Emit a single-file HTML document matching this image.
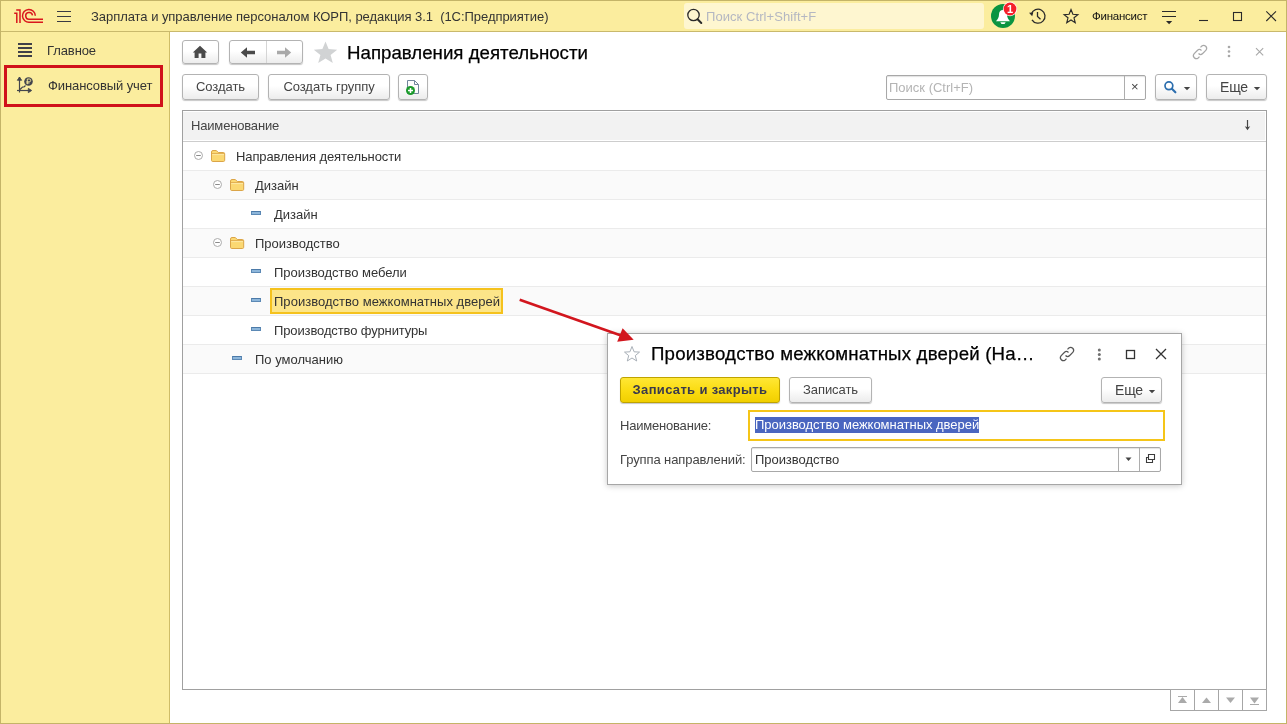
<!DOCTYPE html>
<html lang="ru">
<head>
<meta charset="utf-8">
<title>Направления деятельности</title>
<style>
*{box-sizing:border-box;margin:0;padding:0}
html,body{width:1287px;height:724px;overflow:hidden;background:#fff}
body{font-family:"Liberation Sans",Arial,sans-serif;font-size:13px;color:#333;position:relative}
.abs{position:absolute}
#frame{position:absolute;left:0;top:0;width:1287px;height:724px;border:1px solid #c4b468;pointer-events:none;z-index:50}
#topbar{position:absolute;left:0;top:0;width:1287px;height:32px;background:#fbed9e;border-bottom:1px solid #c9b96c}
#side{position:absolute;left:0;top:32px;width:170px;height:692px;background:#fbed9e;border-right:1px solid #cfbd68}
.t{position:absolute;white-space:nowrap;line-height:16px;letter-spacing:-.1px}
.t,.lbl,.btn{will-change:opacity}
.btn{position:absolute;border:1px solid #b3b3b3;border-radius:3px;background:linear-gradient(#ffffff 0%,#ffffff 45%,#ececec 100%);box-shadow:0 1px 1px rgba(0,0,0,.22);color:#444;font-size:13px;text-align:center;white-space:nowrap;letter-spacing:-.05px}
.row{position:absolute;left:183px;width:1083px;height:29px;border-bottom:1px solid #ebebeb}
.row.alt{background:#fafafa}
.lbl{position:absolute;white-space:nowrap;font-size:13px;color:#333;line-height:16px;letter-spacing:0}
</style>
</head>
<body>
<div id="topbar"></div>
<div id="side"></div>
<div id="frame"></div>

<!-- TOP BAR -->
<svg class="abs" style="left:0;top:0" width="1287" height="32" viewBox="0 0 1287 32">
 <g fill="none" stroke="#d9161d" stroke-width="1.500">
  <path d="M14.200 13.200H16.800V23"/>
  <path d="M16.200 10H20V23"/>
  <path d="M43 22.200H29.500A6.400 6.400 0 1 1 35.300 15.800"/>
  <path d="M43 19.200H29.600A3.400 3.400 0 1 1 32.500 15.300"/>
 </g>
 <path d="M57 11.500H71M57 16.500H71M57 21.500H71" stroke="#3a3a42" stroke-width="1"/>
 <rect x="684" y="3" width="300" height="26" rx="3" fill="#fef6d0"/>
 <circle cx="693.500" cy="15" r="5.700" fill="none" stroke="#2a2a2a" stroke-width="1.300"/>
 <path d="M697.600 19.300L701.300 23" stroke="#2a2a2a" stroke-width="2" stroke-linecap="round"/>
 <!-- bell -->
 <circle cx="1003" cy="16" r="12" fill="#0b9441"/>
 <path d="M1003 10c-2.700 0-4 2-4 4.600 0 3-1.300 5-3 6.600h14c-1.700-1.600-3-3.600-3-6.600 0-2.600-1.300-4.600-4-4.600z" fill="#fff"/>
 <path d="M1000.300 22.300h5.400l-1.200 1.700h-3z" fill="#fff"/>
 <circle cx="1010" cy="9" r="7.200" fill="#fff"/>
 <circle cx="1010" cy="9" r="6.400" fill="#f4212a"/>
 <!-- history -->
 <path d="M1031.300 14.200A7 7 0 1 1 1032 19.800" fill="none" stroke="#2a2a2a" stroke-width="1.300"/>
 <path d="M1029 12.800L1033.300 12.400L1032.200 16.300z" fill="#2a2a2a"/>
 <path d="M1037.500 12V16.500L1040.500 19.300" fill="none" stroke="#2a2a2a" stroke-width="1.300"/>
 <!-- star -->
 <path transform="translate(1071 16.500) scale(.94) translate(-1071 -16.700)" d="M1071 9.300l2 5 5.300.4-4.100 3.400 1.300 5.200-4.500-2.900-4.500 2.900 1.300-5.200-4.100-3.400 5.300-.4z" fill="none" stroke="#2a2a2a" stroke-width="1.250" stroke-linejoin="miter"/>
 <!-- menu -->
 <path d="M1162 11.500H1176M1162 16.500H1176" stroke="#2a2a2a" stroke-width="1.100"/>
 <path d="M1166 21h6.200l-3.100 3.200z" fill="#2a2a2a"/>
 <path d="M1199 20.500H1208" stroke="#2a2a2a" stroke-width="1.100"/>
 <rect x="1233.500" y="12.500" width="8" height="8" fill="none" stroke="#2a2a2a" stroke-width="1.100"/>
 <path d="M1266.300 11.300L1276 21M1276 11.300L1266.300 21" stroke="#2a2a2a" stroke-width="1.100"/>
</svg>
<div class="t" style="left:91px;top:9px;font-size:13px;letter-spacing:-.045px;color:#333">Зарплата и управление персоналом КОРП, редакция 3.1&nbsp; (1С:Предприятие)</div>
<div class="t" style="left:706px;top:9px;font-size:13px;letter-spacing:.07px;color:#b4b7c2">Поиск Ctrl+Shift+F</div>
<div class="t" style="left:1005px;top:1px;font-size:11px;font-weight:bold;color:#fff;width:10px;text-align:center;letter-spacing:0">1</div>
<div class="t" style="left:1092px;top:8px;font-size:11.500px;letter-spacing:-.25px;color:#111">Финансист</div>

<!-- SIDEBAR -->
<svg class="abs" style="left:0;top:32px" width="170" height="80" viewBox="0 32 170 80">
 <path d="M18 44H32M18 48H32M18 52H32M18 56H32" stroke="#404048" stroke-width="2"/>
 <rect x="5.500" y="66.500" width="156" height="39" fill="none" stroke="#d0111b" stroke-width="3"/>
 <g fill="none" stroke="#43454d" stroke-width="1.200">
  <path d="M19.500 77V92.500"/><path d="M17 90.500H31"/>
  <path d="M17.300 80.300L19.500 77L21.700 80.300z" fill="#43454d" stroke-width=".8"/><path d="M28.300 88.300L31.700 90.500L28.300 92.700z" fill="#43454d" stroke-width=".8"/>
  <path d="M20 89.500L22.500 87H24L25.500 85.500"/>
 </g>
 <circle cx="28.500" cy="81.500" r="4.300" fill="#43454d"/>
 <path d="M27.300 84.200V79H29.300A1.400 1.400 0 0 1 29.300 81.800H26.300M26.300 83H29.500" fill="none" stroke="#fbed9e" stroke-width=".9"/>
</svg>
<div class="t" style="left:47px;top:43px;font-size:13px;color:#333">Главное</div>
<div class="t" style="left:48px;top:78px;font-size:13px;color:#333">Финансовый учет</div>

<!-- NAV ROW -->
<div class="btn" style="left:182px;top:40px;width:37px;height:24px"></div>
<svg class="abs" style="left:192px;top:45px" width="16" height="14" viewBox="0 0 16 14"><path d="M8 .8L.8 7.500H2.600V13H6.600V8.500H9.400V13H13.400V7.500H15.200z" fill="#4a4a4a"/></svg>
<div class="btn" style="left:229px;top:40px;width:74px;height:24px"></div>
<div class="abs" style="left:266px;top:41px;width:1px;height:22px;background:#d5d5d5"></div>
<svg class="abs" style="left:240px;top:46px" width="16" height="13" viewBox="0 0 16 13"><path d="M15 4.800H7V1.200L.800 6.500L7 11.800V8.200H15z" fill="#4a4a4a"/></svg>
<svg class="abs" style="left:276px;top:46px" width="16" height="13" viewBox="0 0 16 13"><path d="M1 4.800H9V1.200L15.200 6.500L9 11.800V8.200H1z" fill="#a9a9a9"/></svg>
<svg class="abs" style="left:313px;top:41px" width="25" height="23" viewBox="0 0 25 23"><path d="M12.500 .6l3.100 7.500 8.600.6-6.600 5.200 2.200 8.100-7.300-4.500-7.300 4.500 2.200-8.100L.8 8.700l8.600-.6z" fill="#d1d3d4"/></svg>
<div class="t" style="left:347px;top:42px;font-size:18.670px;line-height:22px;-webkit-text-stroke:.25px #000;letter-spacing:.02px;color:#000">Направления деятельности</div>

<svg class="abs" style="left:1191px;top:43px" width="18" height="18" viewBox="0 0 18 18">
 <g fill="none" stroke="#a8a8a8" stroke-width="1.200"><path d="M7.500 10.500a3 3 0 0 0 4.200 0l3.300-3.300a3 3 0 0 0-4.200-4.200L9.500 4.300"/><path d="M10.500 7.500a3 3 0 0 0-4.200 0L3 10.800A3 3 0 0 0 7.200 15l1.300-1.300"/></g>
</svg>
<svg class="abs" style="left:1225px;top:44px" width="8" height="16" viewBox="0 0 8 16"><g fill="#a8a8a8"><circle cx="4" cy="3" r="1.300"/><circle cx="4" cy="7.500" r="1.300"/><circle cx="4" cy="12" r="1.300"/></g></svg>
<svg class="abs" style="left:1254px;top:46px" width="12" height="12" viewBox="0 0 12 12"><path d="M2 2.200L9.200 9.400M9.200 2.200L2 9.400" stroke="#a8a8a8" stroke-width="1.100"/></svg>

<!-- COMMAND BAR -->
<div class="btn" style="left:182px;top:74px;width:77px;height:26px;line-height:24px">Создать</div>
<div class="btn" style="left:268px;top:74px;width:122px;height:26px;line-height:24px">Создать группу</div>
<div class="btn" style="left:398px;top:74px;width:30px;height:26px"></div>
<svg class="abs" style="left:404px;top:78px" width="18" height="18" viewBox="404 78 18 18">
 <path d="M407.500 80.500H414.500L418.500 84.500V93.500H407.500z" fill="#fdfdfd" stroke="#71859c" stroke-width="1"/><path d="M414.500 80.500V84.500H418.500" fill="none" stroke="#71859c" stroke-width="1"/>
 <circle cx="410.500" cy="90.500" r="4.500" fill="#1b9a2c"/><path d="M410.500 88V93M408 90.500H413" stroke="#fff" stroke-width="1.500"/>
</svg>

<div class="abs" style="left:886px;top:75px;width:260px;height:25px;border:1px solid #a8a8a8;border-radius:2px;background:#fff;box-shadow:inset 0 1px 1px rgba(0,0,0,.12)"></div>
<div class="abs" style="left:1124px;top:76px;width:1px;height:23px;background:#adadad"></div>
<div class="t" style="left:889px;top:80px;font-size:13px;letter-spacing:0;color:#b4b4b4">Поиск (Ctrl+F)</div>
<div class="t" style="left:1131px;top:79px;font-size:13px;color:#444">×</div>
<div class="btn" style="left:1155px;top:74px;width:42px;height:26px"></div>
<svg class="abs" style="left:1162px;top:79px" width="16" height="16" viewBox="0 0 16 16"><circle cx="6.900" cy="6.800" r="3.900" fill="none" stroke="#2c6eae" stroke-width="1.700"/><path d="M9.900 9.800L13.400 13.300" stroke="#2c6eae" stroke-width="2.100" stroke-linecap="round"/></svg>
<svg class="abs" style="left:1183px;top:86px" width="8" height="5" viewBox="0 0 8 5"><path d="M.8 1h6.400L4 4.300z" fill="#444"/></svg>
<div class="btn" style="left:1206px;top:74px;width:61px;height:26px;line-height:24px;font-size:14px;letter-spacing:-.2px;text-align:left;padding-left:13px">Еще</div>
<svg class="abs" style="left:1253px;top:86px" width="8" height="5" viewBox="0 0 8 5"><path d="M.8 1h6.400L4 4.300z" fill="#444"/></svg>

<!-- TABLE -->
<div class="abs" style="left:182px;top:110px;width:1085px;height:580px;border:1px solid #a0a0a0;background:#fff"></div>
<div class="abs" style="left:183px;top:112px;width:1082px;height:28px;background:#f2f2f2"></div>
<div class="abs" style="left:183px;top:141px;width:1083px;height:1px;background:#cdcdcd"></div>
<div class="t" style="left:191px;top:118px;font-size:13px;letter-spacing:-.17px;color:#444">Наименование</div>
<svg class="abs" style="left:1243px;top:119px" width="9" height="12" viewBox="0 0 9 12"><path d="M4.500 1V9" fill="none" stroke="#444" stroke-width="1.200"/><path d="M1.800 7.300L4.500 8.300L7.200 7.300L4.500 11.200z" fill="#444"/></svg>

<!--ROWS-->
<div class="row" style="top:142px"></div>
<svg class="abs" style="left:194px;top:150px" width="10" height="11" viewBox="0 0 10 11"><circle cx="4.500" cy="5.500" r="4" fill="#fff" stroke="#ababab" stroke-width="1"/><path d="M2.200 5.500H6.800" stroke="#8a8a8a" stroke-width="1"/></svg>
<svg class="abs" style="left:210px;top:149px" width="16" height="14" viewBox="0 0 16 14"><path d="M1.500 3Q1.500 1.500 3 1.500H6.300L8.300 3.500H13.300Q14.700 3.500 14.700 4.800V11.300Q14.700 12.500 13.300 12.500H2.800Q1.500 12.500 1.500 11.300z" fill="#fbd872" stroke="#dba548" stroke-width="1"/><path d="M2 4.600H14.200" stroke="#e2ae50" stroke-width="1"/><path d="M2.200 5.600H14" stroke="#fde9a6" stroke-width="1"/></svg>
<div class="lbl" style="left:236px;top:149px;letter-spacing:-0.1px">Направления деятельности</div>
<div class="row alt" style="top:171px"></div>
<svg class="abs" style="left:213px;top:179px" width="10" height="11" viewBox="0 0 10 11"><circle cx="4.500" cy="5.500" r="4" fill="#fff" stroke="#ababab" stroke-width="1"/><path d="M2.200 5.500H6.800" stroke="#8a8a8a" stroke-width="1"/></svg>
<svg class="abs" style="left:229px;top:178px" width="16" height="14" viewBox="0 0 16 14"><path d="M1.500 3Q1.500 1.500 3 1.500H6.300L8.300 3.500H13.300Q14.700 3.500 14.700 4.800V11.300Q14.700 12.500 13.300 12.500H2.800Q1.500 12.500 1.500 11.300z" fill="#fbd872" stroke="#dba548" stroke-width="1"/><path d="M2 4.600H14.200" stroke="#e2ae50" stroke-width="1"/><path d="M2.200 5.600H14" stroke="#fde9a6" stroke-width="1"/></svg>
<div class="lbl" style="left:255px;top:178px">Дизайн</div>
<div class="row" style="top:200px"></div>
<div class="abs" style="left:251px;top:211px;width:10px;height:4px;background:#8db6da;border:1px solid #5c89b5;border-top-color:#4c7aa8"></div>
<div class="lbl" style="left:274px;top:207px">Дизайн</div>
<div class="row alt" style="top:229px"></div>
<svg class="abs" style="left:213px;top:237px" width="10" height="11" viewBox="0 0 10 11"><circle cx="4.500" cy="5.500" r="4" fill="#fff" stroke="#ababab" stroke-width="1"/><path d="M2.200 5.500H6.800" stroke="#8a8a8a" stroke-width="1"/></svg>
<svg class="abs" style="left:229px;top:236px" width="16" height="14" viewBox="0 0 16 14"><path d="M1.500 3Q1.500 1.500 3 1.500H6.300L8.300 3.500H13.300Q14.700 3.500 14.700 4.800V11.300Q14.700 12.500 13.300 12.500H2.800Q1.500 12.500 1.500 11.300z" fill="#fbd872" stroke="#dba548" stroke-width="1"/><path d="M2 4.600H14.200" stroke="#e2ae50" stroke-width="1"/><path d="M2.200 5.600H14" stroke="#fde9a6" stroke-width="1"/></svg>
<div class="lbl" style="left:255px;top:236px">Производство</div>
<div class="row" style="top:258px"></div>
<div class="abs" style="left:251px;top:269px;width:10px;height:4px;background:#8db6da;border:1px solid #5c89b5;border-top-color:#4c7aa8"></div>
<div class="lbl" style="left:274px;top:265px;letter-spacing:-0.03px">Производство мебели</div>
<div class="row alt" style="top:287px"></div>
<div class="abs" style="left:251px;top:298px;width:10px;height:4px;background:#8db6da;border:1px solid #5c89b5;border-top-color:#4c7aa8"></div>
<div class="abs" style="left:270px;top:288px;width:233px;height:26px;background:#fce589;border:2px solid #f5c21d"></div>
<div class="lbl" style="left:274px;top:294px;letter-spacing:0.03px">Производство межкомнатных дверей</div>
<div class="row" style="top:316px"></div>
<div class="abs" style="left:251px;top:327px;width:10px;height:4px;background:#8db6da;border:1px solid #5c89b5;border-top-color:#4c7aa8"></div>
<div class="lbl" style="left:274px;top:323px;letter-spacing:-0.12px">Производство фурнитуры</div>
<div class="row alt" style="top:345px"></div>
<div class="abs" style="left:232px;top:356px;width:10px;height:4px;background:#8db6da;border:1px solid #5c89b5;border-top-color:#4c7aa8"></div>
<div class="lbl" style="left:255px;top:352px">По умолчанию</div>
<!--/ROWS-->

<!-- ARROW -->
<svg class="abs" style="left:510px;top:290px;z-index:30" width="140" height="60" viewBox="510 290 140 60">
 <path d="M519.700 299.700L621 335.500" stroke="#d2161e" stroke-width="2.600" fill="none"/>
 <path d="M633.700 339.700L622.600 328.300L617.200 341.800z" fill="#d2161e"/>
</svg>

<!-- DIALOG -->
<div class="abs" style="left:607px;top:333px;width:575px;height:152px;background:#fff;border:1px solid #a6a6a6;box-shadow:0 1px 6px rgba(0,0,0,.22);z-index:20"></div>
<div id="dlg" class="abs" style="left:0;top:0;z-index:21">
<svg class="abs" style="left:623px;top:345px" width="18" height="18" viewBox="0 0 18 18"><path d="M9 1.500l2.100 5.300 5.400.3-4.200 3.500 1.400 5.400L9 13l-4.700 3 1.400-5.400L1.500 7.100l5.400-.3z" fill="#fff" stroke="#a9b0b8" stroke-width="1"/></svg>
<div class="t" style="left:651px;top:343px;font-size:18.670px;line-height:22px;-webkit-text-stroke:.25px #000;letter-spacing:.18px;color:#000">Производство межкомнатных дверей (На…</div>
<svg class="abs" style="left:1058px;top:345px" width="18" height="18" viewBox="0 0 18 18">
 <g fill="none" stroke="#555" stroke-width="1.200"><path d="M7.500 10.500a3 3 0 0 0 4.200 0l3.300-3.300a3 3 0 0 0-4.200-4.200L9.500 4.300"/><path d="M10.500 7.500a3 3 0 0 0-4.200 0L3 10.800A3 3 0 0 0 7.200 15l1.300-1.300"/></g>
</svg>
<svg class="abs" style="left:1095px;top:346px" width="8" height="16" viewBox="0 0 8 16"><g fill="#707070"><circle cx="4.300" cy="4" r="1.500"/><circle cx="4.300" cy="8.500" r="1.500"/><circle cx="4.300" cy="13" r="1.500"/></g></svg>
<svg class="abs" style="left:1124px;top:348px" width="14" height="14" viewBox="0 0 14 14"><rect x="2.500" y="2.500" width="8" height="8" fill="none" stroke="#333" stroke-width="1.300"/></svg>
<svg class="abs" style="left:1153px;top:346px" width="16" height="16" viewBox="0 0 16 16"><path d="M3 3L13 13M13 3L3 13" stroke="#333" stroke-width="1.300"/></svg>

<div class="btn" style="left:620px;top:377px;width:160px;height:26px;line-height:24px;font-weight:bold;letter-spacing:.33px;color:#3a3a4c;border-color:#bfa300;background:linear-gradient(#ffe735 0%,#fadb10 55%,#f1cf00 100%)">Записать и закрыть</div>
<div class="btn" style="left:789px;top:377px;width:83px;height:26px;line-height:24px">Записать</div>
<div class="btn" style="left:1101px;top:377px;width:61px;height:26px;line-height:24px;font-size:14px;letter-spacing:-.2px;text-align:left;padding-left:13px">Еще</div>
<svg class="abs" style="left:1148px;top:389px" width="8" height="5" viewBox="0 0 8 5"><path d="M.8 1h6.400L4 4.300z" fill="#444"/></svg>

<div class="t" style="left:620px;top:418px;font-size:13px;letter-spacing:-.2px;color:#444">Наименование:</div>
<div class="abs" style="left:748px;top:410px;width:417px;height:31px;border:2px solid #f5c518;background:#fff"></div>
<div class="abs" style="left:755px;top:417px;width:224px;height:16px;background:#4a66c0"></div>
<div class="t" style="left:755px;top:417px;font-size:13px;letter-spacing:-.03px;color:#fff">Производство межкомнатных дверей</div>

<div class="t" style="left:620px;top:452px;font-size:13px;color:#444">Группа направлений:</div>
<div class="abs" style="left:751px;top:447px;width:410px;height:25px;border:1px solid #a8a8a8;border-radius:2px;background:#fff;box-shadow:inset 0 1px 1px rgba(0,0,0,.12)"></div>
<div class="abs" style="left:1118px;top:448px;width:1px;height:23px;background:#adadad"></div>
<div class="abs" style="left:1139px;top:448px;width:1px;height:23px;background:#adadad"></div>
<div class="t" style="left:755px;top:452px;font-size:13px;letter-spacing:-.05px;color:#333">Производство</div>
<svg class="abs" style="left:1125px;top:457px" width="8" height="5" viewBox="0 0 8 5"><path d="M.5.5h6L3.500 4z" fill="#444"/></svg>
<svg class="abs" style="left:1144px;top:452px" width="13" height="13" viewBox="1144 452 13 13"><path d="M1148.500 454.500H1154.500V459.500H1148.500z" fill="#fff" stroke="#3c3c3c" stroke-width="1.100"/><path d="M1148.500 457.500H1146.500V462.500H1152.500V459.500" fill="none" stroke="#3c3c3c" stroke-width="1.100"/></svg>
</div>

<!-- SCROLL BUTTONS -->
<div class="abs" style="left:1170px;top:689px;width:97px;height:22px;border:1px solid #a6a6a6;background:#fff"></div>
<div class="abs" style="left:1194px;top:690px;width:1px;height:20px;background:#a6a6a6"></div>
<div class="abs" style="left:1218px;top:690px;width:1px;height:20px;background:#a6a6a6"></div>
<div class="abs" style="left:1242px;top:690px;width:1px;height:20px;background:#a6a6a6"></div>
<svg class="abs" style="left:1177px;top:696px" width="11" height="8" viewBox="0 0 11 8"><path d="M1 .5H10" stroke="#aaa" stroke-width="1"/><path d="M5.500 1L10 7H1z" fill="#aaa"/></svg>
<svg class="abs" style="left:1201px;top:697px" width="11" height="7" viewBox="0 0 11 7"><path d="M5.500 .5L10 6H1z" fill="#aaa"/></svg>
<svg class="abs" style="left:1225px;top:697px" width="11" height="7" viewBox="0 0 11 7"><path d="M1 .5H10L5.500 6z" fill="#aaa"/></svg>
<svg class="abs" style="left:1249px;top:697px" width="11" height="8" viewBox="0 0 11 8"><path d="M1 .5H10L5.500 6.500z" fill="#aaa"/><path d="M1 7.500H10" stroke="#aaa" stroke-width="1"/></svg>

</body>
</html>
